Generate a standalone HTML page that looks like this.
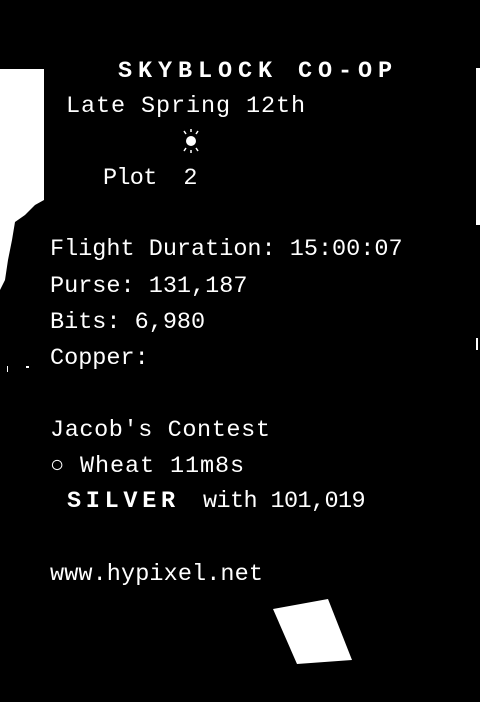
<!DOCTYPE html><html><head><style>
body{margin:0;width:480px;height:702px;background:#000;overflow:hidden;position:relative;font-family:"Liberation Mono",monospace;color:#fff}
.t{position:absolute;white-space:pre;font-size:23.5px;line-height:24px}
.b{font-weight:bold}
</style></head><body>
<svg width="480" height="702" style="position:absolute;left:0;top:0">
<path d="M0 69 H44 V200 L35 205 L25 215 L15 222 L12 240 L8 260 L5 280 L0 290 Z" fill="#fff"/>
<rect x="476" y="68" width="4" height="157" fill="#fff"/>
<rect x="476" y="338" width="2" height="12" fill="#fff"/>
<rect x="7" y="366" width="1" height="6" fill="#fff"/>
<rect x="26" y="366" width="3" height="2" fill="#fff"/>
<polygon points="273,609 328,599 352,660 297,664" fill="#fff"/>
<circle cx="191" cy="141" r="5" fill="#fff"/>
<path d="M184 131l2 3M191 129v3M198 131l-2 3M184 151l2-3M191 153v-3M198 151l-2-3" stroke="#fff" stroke-width="1.5"/>
</svg>
<div class="t b" style="left:118px;top:60px;letter-spacing:5.9px">SKYBLOCK CO-OP</div>
<div class="t" style="left:66px;top:95px;letter-spacing:0.9px">Late Spring 12th</div>
<div class="t" style="left:103px;top:167px;letter-spacing:-0.7px">Plot  2</div>
<div class="t" style="left:50px;top:238px">Flight Duration: 15:00:07</div>
<div class="t" style="left:50px;top:275px">Purse: 131,187</div>
<div class="t" style="left:50px;top:311px">Bits: 6,980</div>
<div class="t" style="left:50px;top:347px">Copper:</div>
<div class="t" style="left:50px;top:419px;letter-spacing:0.6px">Jacob's Contest</div>
<div class="t" style="left:50px;top:455px;letter-spacing:0.9px">○ Wheat 11m8s</div>
<div class="t b" style="left:67px;top:490px;letter-spacing:4.7px">SILVER</div>
<div class="t" style="left:203px;top:490px;letter-spacing:-0.6px">with 101,019</div>
<div class="t" style="left:50px;top:563px;letter-spacing:0.1px">www.hypixel.net</div>
</body></html>
